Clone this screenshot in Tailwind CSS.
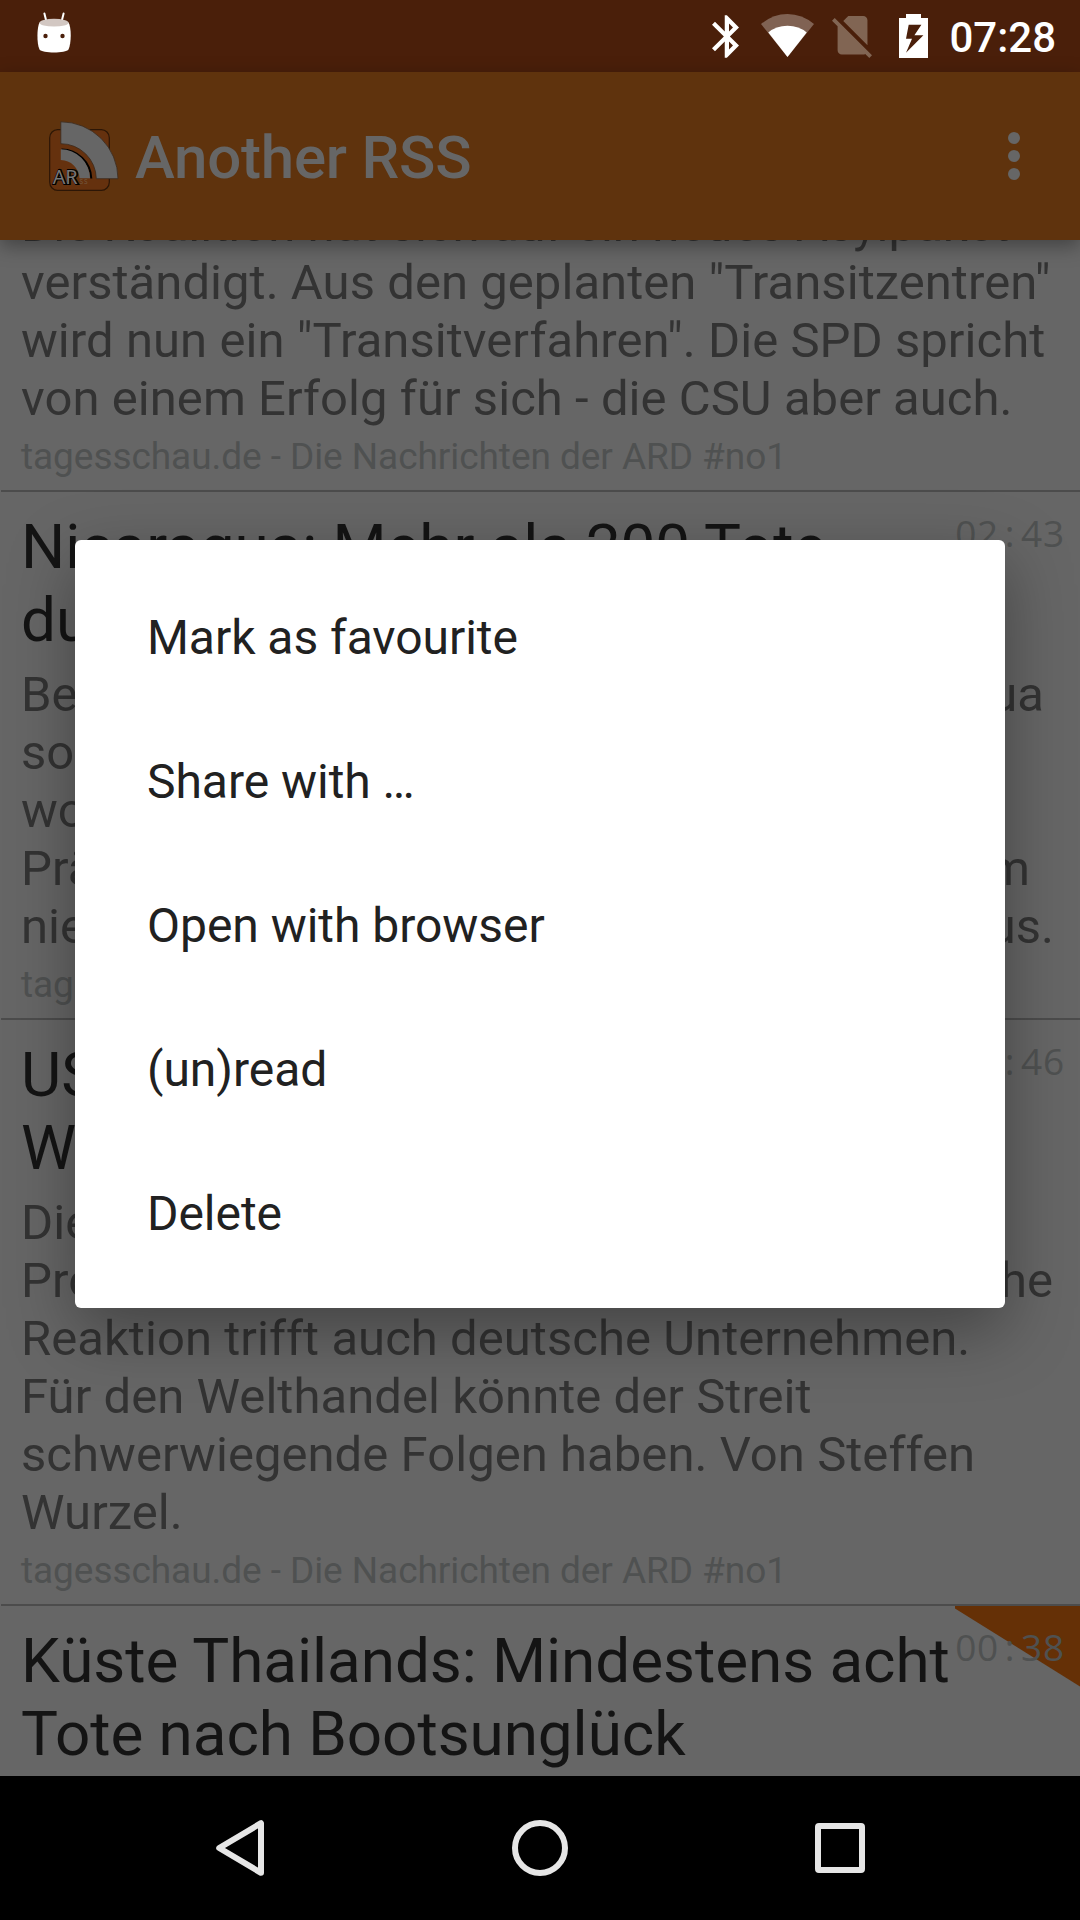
<!DOCTYPE html>
<html lang="de">
<head>
<meta charset="utf-8">
<title>Another RSS</title>
<script src="https://cdn.jsdelivr.net/npm/@tailwindcss/browser@4"></script>
</head>
<body class="w-[1080px] h-[1920px] overflow-hidden bg-black font-['Roboto',sans-serif]">
<div class="relative flex flex-col w-[1080px] h-[1920px]">

  <!-- Status bar -->
  <header class="flex h-[72px] shrink-0 bg-[#4a1f0a] text-white">
    <svg class="ml-[36px] mt-[12px] w-[36px] h-[42px]" viewBox="36 12 36 42">
      <path d="M44.4 13.4l2 8M63.6 13.4l-2 8" stroke="#fff" stroke-width="2" stroke-linecap="round"/>
      <path d="M39.5 22.5C37 27 36.5 43 39.5 49.500C42 53.500 66 53.500 68.500 49.500C71.500 43 71.500 27 68.500 22.500Z" fill="#fff"/>
      <ellipse cx="54" cy="22.700" rx="14.500" ry="3.900" fill="#d2c7c2"/>
      <circle cx="45.500" cy="36" r="2.200" fill="#4a1f0a"/><circle cx="62.500" cy="36" r="2.200" fill="#4a1f0a"/>
    </svg>
    <svg class="ml-auto mt-[15px] w-[27px] h-[43px]" viewBox="5 2 12.710 20" fill="#fff"><path d="M17.710 7.710L12 2h-1v7.590L6.410 5 5 6.410 10.590 12 5 17.590 6.410 19 11 14.410V22h1l5.710-5.710-4.300-4.290 4.300-4.290zM13 5.830l1.880 1.880L13 9.590V5.830zm1.880 10.460L13 18.170v-3.760l1.880 1.880z"/></svg>
    <svg class="ml-[22px] mt-[14px] w-[53px] h-[43px]" viewBox="761 14 53 43" fill="#fff">
      <path d="M761 24Q773 14 787.500 14T814 24L787.500 57Z" fill-opacity=".3"/>
      <path d="M768.300 32.500Q776 25.700 787.500 25.700T806.700 32.500L787.500 57Z"/>
    </svg>
    <svg class="ml-[18px] mt-[16px] w-[40px] h-[42px]" viewBox="2.380 3 18.740 19.620" fill="#816553"><path d="M18.990 5c0-1.100-.890-2-1.990-2h-7L7.660 5.340 19 16.680 18.990 5zM3.650 3.880L2.380 5.150 5 7.770V19c0 1.100.9 2 2 2h10.010c.350 0 .670-.1.960-.260l1.880 1.880 1.270-1.270L3.650 3.880z"/></svg>
    <svg class="ml-[27px] mt-[14px] w-[29px] h-[44px]" viewBox="899 14 29 44">
      <path d="M906 14h15v4h7v40h-29V18h7z" fill="#fff"/>
      <path d="M908.700 24.700h12.700l-7 10.600h9L906 52.700l6-14h-6z" fill="#4a1f0a"/>
    </svg>
    <span class="ml-[21px] mr-[24px] mt-[13px] text-[42px] leading-[49px] font-medium">07:28</span>
  </header>

  <!-- App bar -->
  <div class="relative z-10 flex h-[168px] shrink-0 bg-[#5f330d] shadow-[0_6px_18px_rgba(0,0,0,0.35)]">
    <svg class="ml-[48px] mt-[48px] w-[72px] h-[72px]" viewBox="48 120 72 72">
      <rect x="49.700" y="129.700" width="59.600" height="60.600" rx="8" fill="#65310e" stroke="#2c1606" stroke-width="1.200"/>
      <path d="M60.800 121.800A57.200 57.200 0 0 1 118 178.700H96.300A35.500 35.500 0 0 0 60.800 143.700Z" fill="#666" stroke="#3b2a1c" stroke-width=".8"/>
      <path d="M61.500 149.500A30 30 0 0 1 91.300 178.500" fill="none" stroke="#000" stroke-width="2"/>
      <path d="M60.800 149.300A29.500 29.500 0 0 1 90 178.300H79.500A19 19 0 0 0 60.800 160Z" fill="#666"/>
      <g font-family="Noto Sans, sans-serif">
        <text x="53.300" y="184.200" font-size="19.500" textLength="25" lengthAdjust="spacingAndGlyphs" fill="#000" stroke="#000" stroke-width="2">AR</text>
        <text x="52.700" y="183.600" font-size="19.500" textLength="25" lengthAdjust="spacingAndGlyphs" fill="#777">AR</text>
        <text x="79.500" y="183.700" font-size="6.500" textLength="8" fill="#74583f">SS</text>
      </g>
    </svg>
    <h1 class="ml-[15px] mt-[51px] text-[60px] leading-[70px] tracking-[-0.22px] font-medium text-[#666]">Another RSS</h1>
    <svg class="ml-auto mr-[60px] mt-[60px] w-[12px] h-[48px]" viewBox="0 0 12 48" fill="#666"><circle cx="6" cy="6" r="6"/><circle cx="6" cy="24" r="6"/><circle cx="6" cy="42" r="6"/></svg>
  </div>

  <!-- Feed list -->
  <main class="flex h-[1536px] shrink-0 flex-col overflow-hidden bg-[#666] whitespace-nowrap text-[#333]">
    <article class="-mt-[44px] shrink-0 pl-[21px] pb-[12px]">
      <p class="text-[49px] leading-[58px] tracking-[0.05px]">Die Koalition hat sich auf ein neues Asylpaket<br>verständigt. Aus den geplanten "Transitzentren"<br>wird nun ein "Transitverfahren". Die SPD spricht<br>von einem Erfolg für sich - die CSU aber auch.</p>
      <p class="mt-[8px] text-[37px] leading-[42px] tracking-[-0.06px] text-[#4f5151]">tagesschau.de - Die Nachrichten der ARD #no1</p>
    </article>
    <div class="ml-px h-[2px] shrink-0 bg-[#4c4c4c]"></div>

    <article class="shrink-0 pl-[21px] pt-[18px] pb-[12px]">
      <div class="flex justify-between">
        <h2 class="text-[62px] leading-[73px] tracking-[-0.06px] text-[#141414]">Nicaragua: Mehr als 200 Tote<br>durch Gewalt</h2>
        <time class="mr-[15px] -mt-[2px] text-[37px] leading-[50px] tracking-[0.8px] font-['Open_Sans',sans-serif] text-[#4f5151]">02<span class="inline-block w-[22px] text-center">:</span>43</time>
      </div>
      <div class="mt-[10px] text-[49px] leading-[58px] tracking-[0.05px]">
        <p class="flex w-[1023px] justify-between"><span>Bei den Protesten</span><span>in Nicaragua</span></p>
        <p>sollen mehr Menschen</p>
        <p>worden sein als bisher</p>
        <p class="flex w-[1009px] justify-between"><span>Präsident Ortega</span><span>dem</span></p>
        <p class="flex w-[1033px] justify-between"><span>niedergeschlagen</span><span>aus.</span></p>
      </div>
      <p class="mt-[8px] text-[37px] leading-[42px] tracking-[-0.06px] text-[#4f5151]">tagesschau.de - Die Nachrichten der ARD #no1</p>
    </article>
    <div class="ml-px h-[2px] shrink-0 bg-[#4c4c4c]"></div>

    <article class="shrink-0 pl-[21px] pt-[18px] pb-[12px]">
      <div class="flex justify-between">
        <h2 class="text-[62px] leading-[73px] tracking-[-0.06px] text-[#141414]">US-Zölle:<br>Welthandel</h2>
        <time class="mr-[15px] -mt-[2px] text-[37px] leading-[50px] tracking-[0.8px] font-['Open_Sans',sans-serif] text-[#4f5151]">01<span class="inline-block w-[22px] text-center">:</span>46</time>
      </div>
      <div class="mt-[10px] text-[49px] leading-[58px] tracking-[0.05px]">
        <p>Die US-Zölle auf</p>
        <p class="flex w-[1032px] justify-between"><span>Produkte</span><span>chinesische</span></p>
        <p>Reaktion trifft auch deutsche Unternehmen.<br>Für den Welthandel könnte der Streit<br>schwerwiegende Folgen haben. Von Steffen<br>Wurzel.</p>
      </div>
      <p class="mt-[8px] text-[37px] leading-[42px] tracking-[-0.06px] text-[#4f5151]">tagesschau.de - Die Nachrichten der ARD #no1</p>
    </article>
    <div class="ml-px h-[2px] shrink-0 bg-[#4c4c4c]"></div>

    <article class="relative shrink-0 pl-[21px] pt-[18px]">
      <svg class="absolute right-0 top-0 w-[125px] h-[81px]" viewBox="0 0 125 81"><path d="M0 0H125V80.500L0 2.500Z" fill="#653006"/></svg>
      <div class="relative flex justify-between">
        <h2 class="text-[62px] leading-[73px] tracking-[-0.06px] text-[#141414]">Küste Thailands: Mindestens acht<br>Tote nach Bootsunglück</h2>
        <time class="mr-[15px] -mt-[2px] text-[37px] leading-[50px] tracking-[0.8px] font-['Open_Sans',sans-serif] text-[#4f5151]">00<span class="inline-block w-[22px] text-center">:</span>38</time>
      </div>
    </article>
  </main>

  <!-- Navigation bar -->
  <nav class="grid h-[144px] shrink-0 grid-cols-3 items-center justify-items-center bg-black px-[90px]">
    <svg class="w-[60px] h-[60px]" viewBox="210 1818 60 60"><path d="M219.200 1848L261 1823.200V1872.800Z" fill="none" stroke="#e6e6e6" stroke-width="6" stroke-linejoin="round"/></svg>
    <svg class="w-[60px] h-[60px]" viewBox="0 0 60 60"><circle cx="30" cy="30" r="25" fill="none" stroke="#e6e6e6" stroke-width="6"/></svg>
    <svg class="w-[60px] h-[60px]" viewBox="0 0 60 60"><rect x="8" y="8" width="44" height="44" rx="1" fill="none" stroke="#e6e6e6" stroke-width="6"/></svg>
  </nav>

  <!-- Context menu -->
  <ul class="absolute left-[75px] top-[540px] z-20 flex h-[768px] w-[930px] flex-col rounded-[6px] bg-white pt-[26px] pb-[22px] text-[48px] tracking-[-0.04px] text-[#212121] shadow-[0_22px_66px_rgba(0,0,0,0.34)]">
    <li class="flex h-[144px] items-center px-[72px]">Mark as favourite</li>
    <li class="flex h-[144px] items-center px-[72px]">Share with …</li>
    <li class="flex h-[144px] items-center px-[72px]">Open with browser</li>
    <li class="flex h-[144px] items-center px-[72px]">(un)read</li>
    <li class="flex h-[144px] items-center px-[72px]">Delete</li>
  </ul>
</div>
</body>
</html>
